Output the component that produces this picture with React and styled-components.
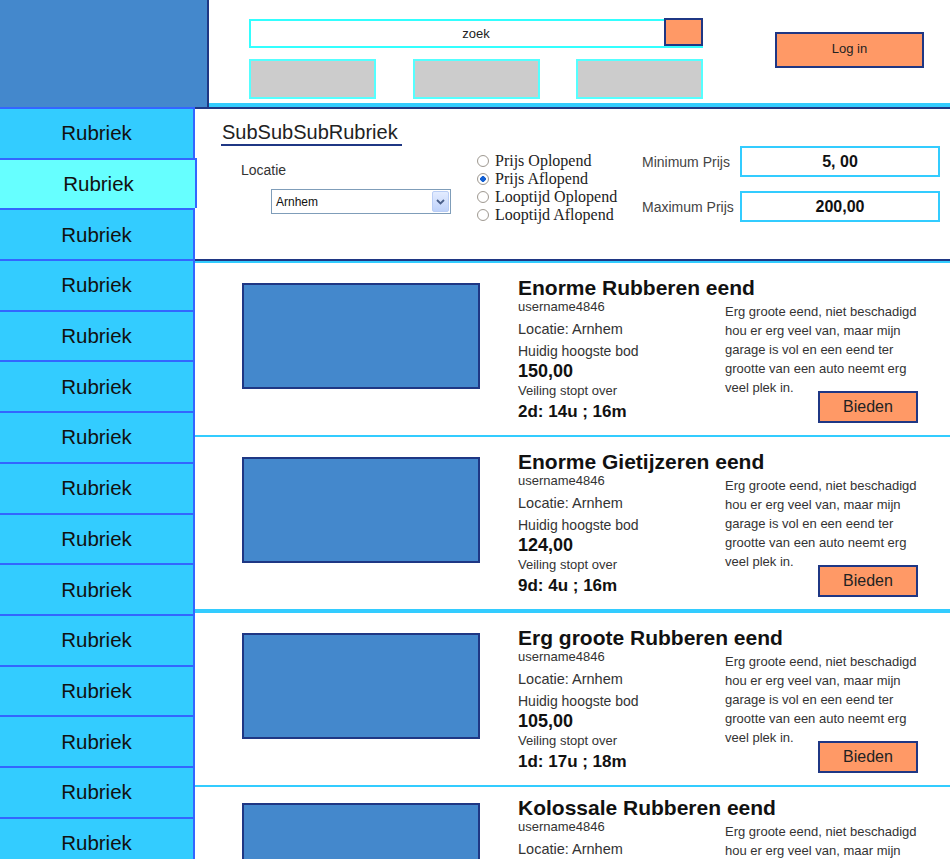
import React from "react";
import styled, { createGlobalStyle } from "styled-components";

const NAVY = "#1f3784";
const SKY = "#33ccff";
const ORANGE = "#ff9966";

const Global = createGlobalStyle`
  html, body { margin: 0; padding: 0; background: #fff; }
  body { font-family: "Liberation Sans", Arial, sans-serif; color: #222; }
  * { box-sizing: border-box; }
`;

const Page = styled.div`
  width: 950px;
  height: 859px;
  overflow: hidden;
  display: flex;
  flex-direction: column;
`;

const Header = styled.header`
  display: flex;
  height: 107px;
  flex-shrink: 0;
`;

const Logo = styled.div`
  width: 209px;
  background: #4488cc;
  border-right: 2px solid ${NAVY};
`;

const TopBar = styled.div`
  flex: 1;
  display: flex;
  align-items: flex-start;
  padding: 19px 0 0 40px;
  border-bottom: 4px solid ${SKY};
`;

const SearchArea = styled.div`
  width: 454px;
  display: flex;
  flex-direction: column;
  gap: 11px;
`;

const SearchBox = styled.div`
  position: relative;
  height: 29px;
  border: 2px solid #33ffff;
`;

const SearchInput = styled.input`
  width: 100%;
  height: 100%;
  border: none;
  outline: none;
  padding: 0;
  text-align: center;
  font-family: "Liberation Sans", Arial, sans-serif;
  font-size: 13px;
  color: #222;
  background: transparent;
`;

const SearchButton = styled.button`
  position: absolute;
  right: -2px;
  top: -3px;
  width: 39px;
  height: 28px;
  background: ${ORANGE};
  border: 2px solid ${NAVY};
  padding: 0;
`;

const TabRow = styled.div`
  display: flex;
  justify-content: space-between;
`;

const TabBox = styled.div`
  width: 127px;
  height: 40px;
  background: #cccccc;
  border: 2px solid #55ffff;
`;

const LoginButton = styled.button`
  margin: 13px 0 0 72px;
  width: 149px;
  height: 36px;
  background: ${ORANGE};
  border: 2px solid ${NAVY};
  font-family: "Liberation Sans", Arial, sans-serif;
  font-size: 13px;
  line-height: 14px;
  color: #222;
  padding: 0 0 2px;
`;

const Body = styled.div`
  display: flex;
  flex: 1;
  min-height: 0;
`;

const Sidebar = styled.nav`
  width: 195px;
  flex-shrink: 0;
  display: flex;
  flex-direction: column;
`;

const SideItem = styled.div`
  height: 50.7px;
  flex-shrink: 0;
  width: ${(p) => (p.$active ? "197px" : "195px")};
  background: ${(p) => (p.$active ? "#66ffff" : SKY)};
  border-top: 2px solid #3366ff;
  border-right: 2px solid #3366ff;
  position: relative;
  z-index: ${(p) => (p.$active ? 1 : 0)};
  display: flex;
  align-items: center;
  justify-content: center;
  padding-left: ${(p) => (p.$active ? "2px" : "0")};
  font-size: 20.5px;
  color: #111;
`;

const Main = styled.main`
  flex: 1;
  display: flex;
  flex-direction: column;
`;

const FilterPanel = styled.section`
  height: 154px;
  flex-shrink: 0;
  border-top: 2px solid ${NAVY};
  border-bottom: 2px solid ${NAVY};
  display: flex;
  padding: 12px 0 0 26px;
`;

const LeftCol = styled.div`
  width: 256px;
  display: flex;
  flex-direction: column;
  align-items: flex-start;
`;

const Title = styled.h2`
  margin: 0;
  font-weight: normal;
  font-size: 20px;
  line-height: 23px;
  color: #222;
  padding: 0 4px 0 1px;
  border-bottom: 2px solid ${NAVY};
`;

const FieldLabel = styled.div`
  margin: 16px 0 0 20px;
  font-size: 14px;
  line-height: 16px;
  color: #333;
`;

const SelectBox = styled.div`
  margin: 11px 0 0 50px;
  width: 180px;
  height: 25px;
  border: 1px solid #7f9db9;
  display: flex;
  align-items: center;
  justify-content: space-between;
  padding: 0 1px 0 4px;
  font-size: 12px;
  color: #111;
`;

const DropButton = styled.span`
  width: 17px;
  height: 21px;
  border: 1px solid #b9cdf5;
  border-radius: 2px;
  background: linear-gradient(#e3ecff, #bfd2fa);
  display: flex;
  align-items: center;
  justify-content: center;
`;

const RadioCol = styled.div`
  width: 165px;
  padding-top: 31px;
  display: flex;
  flex-direction: column;
`;

const RadioRow = styled.label`
  height: 18px;
  display: flex;
  align-items: center;
  gap: 6px;
  font-family: "Liberation Serif", "Times New Roman", serif;
  font-size: 16px;
  color: #222;
`;

const Radio = styled.input`
  appearance: none;
  margin: 0;
  width: 12px;
  height: 12px;
  border-radius: 50%;
  border: 1px solid #a09a92;
  background: radial-gradient(circle at 50% 50%, ${(p) => (p.checked ? "#1460d2 0 2.6px, #fff 3px" : "#fff 0")}, #fff 60%, #e6e6e6);
  flex-shrink: 0;
`;

const PriceCol = styled.div`
  padding-top: 25px;
  display: flex;
  flex-direction: column;
  gap: 14px;
`;

const PriceRow = styled.div`
  display: flex;
  align-items: center;
`;

const PriceLabel = styled.span`
  width: 98px;
  font-size: 14px;
  color: #444;
  white-space: nowrap;
`;

const PriceField = styled.div`
  width: 200px;
  height: 31px;
  border: 2px solid ${SKY};
  display: flex;
  align-items: center;
  justify-content: center;
  font-weight: bold;
  font-size: 16px;
  color: #111;
`;

const List = styled.div`
  border-top: 2px solid ${SKY};
`;

const Item = styled.article`
  height: ${(p) => 172 + p.$rule}px;
  border-bottom: ${(p) => p.$rule}px solid ${SKY};
  display: flex;
  align-items: flex-start;
  padding: ${(p) => (p.$lift ? 9 : 13)}px 0 0 47px;
`;

const Photo = styled.div`
  width: 238px;
  height: 106px;
  margin: 7px 38px 0 0;
  background: #4488cc;
  border: 2px solid ${NAVY};
  flex-shrink: 0;
`;

const Info = styled.div`
  width: 207px;
  flex-shrink: 0;
  display: flex;
  flex-direction: column;
  color: #222;
`;

const ItemTitle = styled.h3`
  margin: 0;
  font-size: 21px;
  line-height: 24px;
  font-weight: bold;
  color: #111;
  white-space: nowrap;
`;

const Line = styled.div`
  font-size: ${(p) => p.$size}px;
  line-height: ${(p) => p.$lh}px;
  font-weight: ${(p) => (p.$bold ? "bold" : "normal")};
  color: ${(p) => (p.$bold ? "#111" : "#333")};
  white-space: nowrap;
`;

const Desc = styled.div`
  width: 196px;
  margin-top: 26px;
  display: flex;
  flex-direction: column;
`;

const DescText = styled.p`
  margin: 0;
  font-size: 13px;
  line-height: 19px;
  color: #333;
`;

const BidButton = styled.button`
  align-self: flex-end;
  margin: -6px 3px 0 0;
  width: 100px;
  height: 32px;
  background: ${ORANGE};
  border: 2px solid ${NAVY};
  font-family: "Liberation Sans", Arial, sans-serif;
  font-size: 16px;
  color: #222;
  padding: 0;
`;

const items = [
  { title: "Enorme Rubberen eend", bid: "150,00", time: "2d: 14u ; 16m", rule: 2 },
  { title: "Enorme Gietijzeren eend", bid: "124,00", time: "9d: 4u ; 16m", rule: 4 },
  { title: "Erg groote Rubberen eend", bid: "105,00", time: "1d: 17u ; 18m", rule: 2 },
  { title: "Kolossale Rubberen eend", bid: "98,00", time: "3d: 2u ; 5m", rule: 2, lift: true },
];

const desc =
  "Erg groote eend, niet beschadigd hou er erg veel van, maar mijn garage is vol en een eend ter grootte van een auto neemt erg veel plek in.";

const sorts = ["Prijs Oplopend", "Prijs Aflopend", "Looptijd Oplopend", "Looptijd Aflopend"];

export default function App() {
  return (
    <Page>
      <Global />
      <Header>
        <Logo />
        <TopBar>
          <SearchArea>
            <SearchBox>
              <SearchInput defaultValue="zoek" readOnly />
              <SearchButton aria-label="zoek" />
            </SearchBox>
            <TabRow>
              <TabBox />
              <TabBox />
              <TabBox />
            </TabRow>
          </SearchArea>
          <LoginButton>Log in</LoginButton>
        </TopBar>
      </Header>
      <Body>
        <Sidebar>
          {Array.from({ length: 15 }).map((_, i) => (
            <SideItem key={i} $active={i === 1}>
              Rubriek
            </SideItem>
          ))}
        </Sidebar>
        <Main>
          <FilterPanel>
            <LeftCol>
              <Title>SubSubSubRubriek</Title>
              <FieldLabel>Locatie</FieldLabel>
              <SelectBox>
                <span>Arnhem</span>
                <DropButton>
                  <svg width="9" height="6" viewBox="0 0 9 6">
                    <path d="M1 1 L4.5 4.5 L8 1" fill="none" stroke="#4a5f8a" strokeWidth="1.8" />
                  </svg>
                </DropButton>
              </SelectBox>
            </LeftCol>
            <RadioCol>
              {sorts.map((s, i) => (
                <RadioRow key={s}>
                  <Radio type="radio" name="sort" checked={i === 1} readOnly />
                  {s}
                </RadioRow>
              ))}
            </RadioCol>
            <PriceCol>
              <PriceRow>
                <PriceLabel>Minimum Prijs</PriceLabel>
                <PriceField>5, 00</PriceField>
              </PriceRow>
              <PriceRow>
                <PriceLabel>Maximum Prijs</PriceLabel>
                <PriceField>200,00</PriceField>
              </PriceRow>
            </PriceCol>
          </FilterPanel>
          <List>
            {items.map((it) => (
              <Item key={it.title} $rule={it.rule} $lift={it.lift}>
                <Photo />
                <Info>
                  <ItemTitle>{it.title}</ItemTitle>
                  <Line $size={13} $lh={14}>username4846</Line>
                  <Line $size={14.5} $lh={30}>Locatie: Arnhem</Line>
                  <Line $size={14} $lh={14}>Huidig hoogste bod</Line>
                  <Line $size={18} $lh={26} $bold>{it.bid}</Line>
                  <Line $size={13} $lh={14}>Veiling stopt over</Line>
                  <Line $size={17} $lh={28} $bold>{it.time}</Line>
                </Info>
                <Desc>
                  <DescText>{desc}</DescText>
                  <BidButton>Bieden</BidButton>
                </Desc>
              </Item>
            ))}
          </List>
        </Main>
      </Body>
    </Page>
  );
}
